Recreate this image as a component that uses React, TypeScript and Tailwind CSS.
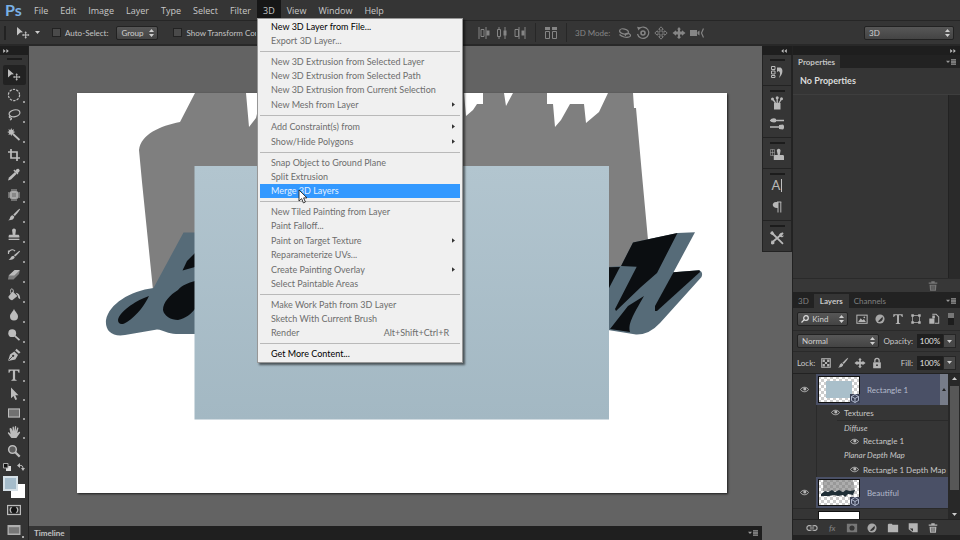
import type { ReactNode } from 'react';

type IconProps = { children: ReactNode; className?: string; size?: string };

// Drawn on a 14px grid, inherits the text colour
function Icon({ children, className = '', size = 'w-[14px] h-[14px]' }: IconProps) {
  return (
    <svg viewBox="0 0 14 14" fill="currentColor" className={`${size} shrink-0 ${className}`} aria-hidden="true">
      {children}
    </svg>
  );
}

const SMALL = 'w-[12px] h-[12px]';

const line = { fill: 'none', stroke: 'currentColor', strokeWidth: 1.2 };

const ICONS = {
  move: (
    <>
      <path d="M1 1l6 5.2-2.7.2L1 9.5z" />
      <path d="M9.7 5.2l1.3 1.6h-.8v1.7h1.7v-.8l1.6 1.3-1.6 1.3v-.8h-1.7v1.7h.8l-1.3 1.6-1.3-1.6h.8V9.5H7.500v.8L5.900 9l1.600-1.300v.8h1.700V6.800h-.8z" />
    </>
  ),
  marquee: <circle cx="7" cy="7" r="5.6" {...line} strokeDasharray="2.4 1.1" />,
  lasso: (
    <>
      <ellipse cx="7.5" cy="5.3" rx="5.500" ry="3.400" {...line} transform="rotate(-12 7.5 5.3)" />
      <path d="M3.500 7.500c-1.800.6-1.600 2.300 0 2.300s1.200 1.800-.6 2.200" {...line} />
    </>
  ),
  wand: (
    <>
      <path d="M4.300 0l.8 2 2-.8-.8 2 2 .9-2 .9.8 2-2-.8-.8 2-.9-2-2 .8.8-2-2-.9 2-.9-.8-2 2 .8z" />
      <path d="M6 6l6.500 6" stroke="currentColor" strokeWidth="1.800" />
    </>
  ),
  crop: <path d="M4 1v9h9M1 4h9v9" {...line} strokeWidth="1.700" />,
  eyedropper: (
    <>
      <path d="M8.300 2.800c1.200-2 2.400-2.500 3.700-1.600 1.300 1.200.8 2.500-1.200 3.700l.6.7-1 1-4-4 1-1z" />
      <path d="M8 4L9.500 6 4 11.500l-3 1 1-3z" />
    </>
  ),
  patch: (
    <>
      <rect x="2.500" y="3" width="9" height="8" rx="2.500" opacity=".85" />
      <path d="M5 1v2m2-2v2m2-2v2M5 11v2m2-2v2m2-2v2M1 5h1.500M1 7h1.500M1 9h1.500M11.500 5H13m-1.500 2H13m-1.500 2H13" stroke="currentColor" strokeWidth=".9" />
      <rect x="5" y="5" width="4" height="4" fill="#888" />
    </>
  ),
  brush: (
    <>
      <path d="M13 .8c.7.600-4 6.200-5.200 7.300L6.300 6.700C7.600 5.500 12.400.200 13 .8z" />
      <path d="M5.800 7.200l1.600 1.500c-.4 2.600-3 3.800-6.400 3.500 1.900-.7 1.600-1.700 2.200-3 .5-1.200 1.500-2 2.600-2z" />
    </>
  ),
  stamp: (
    <>
      <path d="M5.700 6.800L5.200 3a1.900 1.900 0 113.600 0l-.5 3.800H11c.8 0 1.400.7 1.400 1.500v1.200H1.600V8.300c0-.8.6-1.500 1.400-1.500z" />
      <path d="M1.600 10.700h10.800V12H1.600z" />
    </>
  ),
  history: (
    <>
      <path d="M13 2.800c.6.600-3.500 4.600-4.700 5.700L6.900 7.300C8.100 6.200 12.500 2.300 13 2.800zM6.400 7.700l1.400 1.300c-.4 2.200-2.800 3-6.300 2.900 2.300-1.200 2.300-4 4.900-4.200z" />
      <path d="M1.500 6V2.500M1.500 4.300C3.500 1.200 6.500 1 8 3.200" {...line} />
    </>
  ),
  eraser: (
    <>
      <path d="M7.600 2.500h5.200L12 6 6.500 11.500H1l.7-4z" opacity=".55" />
      <path d="M7.600 2h5.400L7.300 7.500H1.700z" />
    </>
  ),
  bucket: (
    <>
      <path d="M5.500 3.500l5 4.400-5.300 4.300C3.800 12.700 1 10 1.500 8.600z" />
      <path d="M4 5.500c-1-2.800-.4-4.700.8-4.700s1.600 1.700 1.800 3.700" {...line} strokeWidth=".9" />
      <path d="M8.600 4.700c2.600.200 4.600 2 4.600 6.300-1.200 0-2.200-.8-2.200-3z" />
    </>
  ),
  drop: <path d="M7 .8c.7 2.600 4 4.700 4 7.700a4 4 0 01-8 0c0-3 3.300-5.100 4-7.700z" />,
  dodge: (
    <>
      <circle cx="5.200" cy="5.200" r="3.900" />
      <path d="M7.800 7.800l4.700 4.400" stroke="currentColor" strokeWidth="1.700" />
    </>
  ),
  pen: (
    <>
      <path d="M1 13L3 6.500l4.300-3L11 7l-2.700 4.400z" />
      <path d="M8.200 2.500l1.300-1.800 4 3.600-1.600 1.500z" />
      <path d="M1.500 12.500l4.300-4.300" stroke="#333" strokeWidth=".8" />
      <circle cx="6.200" cy="7.800" r="1.100" fill="#333" />
    </>
  ),
  type: <path d="M1.500 1.500h11v3.300h-1C11.300 3.300 10.700 2.700 9.300 2.700H8.100v8c0 .9.400 1.100 1.500 1.200v.8H4.400v-.8c1.100-.1 1.500-.3 1.500-1.200v-8H4.700c-1.400 0-2 .6-2.200 2.100h-1z" />,
  pointer: <path d="M4 .5l7.500 7.700H8.300l1.800 4-1.800.8-1.800-4L4 11.300z" />,
  shape: (
    <>
      <rect x="1" y="2.500" width="12" height="9" opacity=".45" />
      <rect x="1.500" y="3" width="11" height="8" fill="none" stroke="currentColor" />
    </>
  ),
  hand: <path d="M3.300 3c.7-.3 1.200.2 1.500 1l.9 2.300-.2-4c0-1 1.300-1.100 1.400-.1L7.300 6l.6-4.500c.2-.9 1.400-.7 1.300.3l-.3 4.400 1.200-3.300c.4-.9 1.500-.4 1.300.4L10.300 8l1.500-1c.9-.5 1.700.3 1.100 1l-3.300 4.700c-.4.5-5 .6-5.400 0L1 8.500c-.5-1 .6-1.500 1.300-.8l1.300 1.200L2.600 4.300c-.2-.6.200-1.100.7-1.300z" />,
  zoom: (
    <>
      <circle cx="5.500" cy="5.500" r="3.800" {...line} strokeWidth="1.600" />
      <circle cx="5.500" cy="5.500" r="3" opacity=".3" />
      <path d="M8 8l4.700 4.600" stroke="currentColor" strokeWidth="2.200" />
    </>
  ),
  mask: (
    <>
      <rect x=".6" y="2.500" width="12.800" height="9" {...line} />
      <circle cx="7" cy="7" r="2.900" fill="#151515" />
      <path d="M4.500 4.200C3 5.800 3 8.200 4.500 9.800M9.500 4.200c1.500 1.600 1.500 4 0 5.600" {...line} />
    </>
  ),
  screen: (
    <>
      <rect x=".5" y="2" width="13" height="10" opacity=".9" />
      <rect x="1.800" y="4.200" width="10.400" height="6.300" fill="#777" />
    </>
  ),
  alignLeft: (
    <>
      <path d="M2 1v12M4 3.500h3v7H4zM9 1v12" {...line} strokeWidth="1" />
      <path d="M9.500 4.500h3v5h-3z" />
    </>
  ),
  alignCenter: (
    <>
      <path d="M4 1v2m0 8v2M2.500 3.500h3v7h-3zM10 1v12" {...line} strokeWidth="1" />
      <path d="M8.500 4.500h3v5h-3z" />
    </>
  ),
  alignRight: (
    <>
      <path d="M6 1v12M2 3.500h3.500v7H2zM12 1v12" {...line} strokeWidth="1" />
      <path d="M8.500 4.500h3v5h-3z" />
    </>
  ),
  distribute: (
    <>
      <path d="M1.500 5.500h4v7h-4zM8.500 5.500h4v7h-4z" {...line} strokeWidth="1" />
      <path d="M1 1h5v3H1zM8 1h5v3H8z" />
    </>
  ),
  orbit: (
    <>
      <ellipse cx="6" cy="5.500" rx="4.500" ry="2.500" {...line} transform="rotate(15 6 5.500)" />
      <path d="M1.500 8.500c2 2.300 7 3.500 10 2.300 2-1 .8-3.300-2-3.400-2.500 0-3 1.500-1.600 2.300" {...line} />
    </>
  ),
  roll: (
    <>
      <path d="M3 2.700A5.700 5.700 0 111.500 8" {...line} />
      <path d="M1 .8l3.800.6-2.300 3z" />
      <circle cx="7" cy="7" r="2" {...line} strokeWidth="1.600" />
    </>
  ),
  pan: <path d="M7 .8l2.300 2.500H8v2.700h2.700V4.700L13.200 7l-2.500 2.300V8H8v2.700h1.300L7 13.200l-2.300-2.500H6V8H3.300v1.300L.8 7l2.500-2.300V6H6V3.300H4.700z" fill="none" stroke="currentColor" strokeWidth=".9" />,
  slide: <path d="M7 1l2 2.500H8v2h2V4.300L13.500 7 10 9.700V8.500H8v2.200h1.300L7 13l-2.300-2.300H6V8.500H4v1.200L.5 7 4 4.300v1.200h2v-2H5z" />,
  camera: (
    <>
      <path d="M0 4h7v6H0zM7.500 6l2-1.500v5l-2-1.500z" />
      <path d="M13.500 2.500L11.500 7l2 4.500" {...line} />
    </>
  ),
  properties3d: (
    <>
      <path d="M1.500 1.500H5v3H1.500zM1.500 6H5v3H1.500zM1.500 10.500H5v2H1.500z" {...line} strokeWidth="1" />
      <path d="M7 2.500h3.500c3 1.500 2.500 7-1.500 10.500 1.700-4 1.200-6-.3-7L7 7z" />
    </>
  ),
  brushes: (
    <>
      <path d="M4 7h6.500v6.500H4z" />
      <path d="M5.500 7L3 3.500M7.200 7V2M9 7l2.500-4" stroke="currentColor" strokeWidth="1.300" />
      <circle cx="2.500" cy="3" r="1.500" />
      <circle cx="7.200" cy="1.700" r="1.500" />
      <circle cx="11.500" cy="2.700" r="1.500" />
    </>
  ),
  presets: (
    <>
      <path d="M0 3.500h14M0 10h9" stroke="currentColor" strokeWidth="1.400" />
      <path d="M1 2c2.500-1 4-.7 5 0v3c-1.500.7-3 .5-5-.3zM9 8l4-.5c1.500 1 1.500 4 0 5L9 12z" />
    </>
  ),
  cloneSource: (
    <>
      <path d="M.5 1.500h4v6h-4zM.5 4.500h4M2.500 1.500v6" fill="none" stroke="currentColor" strokeWidth=".8" opacity=".6" />
      <path d="M7.800 7L7 3.500a1.900 1.900 0 113.400 0L9.800 7h3c.7 0 1.200.6 1.200 1.300V12H3.800V8.300C3.800 7.600 4.300 7 5 7z" />
    </>
  ),
  tools: (
    <>
      <path d="M1.500 1.500l11 10.800M12.500 2.500L2 11.500" stroke="currentColor" strokeWidth="1.800" strokeLinecap="round" />
      <path d="M13.500 2l-2 1.500.5 1.300 1.800-.3c-.3 1.700-2.300 2.300-3.800 1.300L9 4.800C9 2.500 11 1 13.500 2zM0 2.500L2.500 0l1.700 2.500L2.500 4.300zM1.500 9.500c1.700 0 3 1.200 3 2.500s-2 2-3.500 1z" />
    </>
  ),
  image: (
    <>
      <rect x="1" y="2.500" width="12" height="9.500" {...line} />
      <path d="M2.500 10.500L5.500 6l2 2.500L9.300 7l2.200 3.500z" />
      <circle cx="9.700" cy="5" r="1" />
    </>
  ),
  adjust: (
    <>
      <circle cx="7" cy="7" r="5.300" opacity=".9" />
      <path d="M10 4.500A4.200 4.200 0 014.500 10z" fill="#333" />
    </>
  ),
  frame: (
    <>
      <rect x="3" y="3" width="8" height="8" {...line} strokeWidth=".9" />
      <path d="M1.500 1.500h3v3h-3zM9.500 1.500h3v3h-3zM1.500 9.500h3v3h-3zM9.500 9.500h3v3h-3z" />
    </>
  ),
  smart: (
    <>
      <path d="M5 1.500h4.500l3 3V12H8" {...line} />
      <path d="M1.500 6.500h6v6h-6zM5 3h3v3H5z" />
    </>
  ),
  checker: (
    <>
      <rect x="2" y="2" width="10" height="10" {...line} />
      <path d="M3 3h2.700v2.700H3zM8.300 3H11v2.700H8.300zM5.700 5.700h2.600v2.600H5.700zM3 8.300h2.700V11H3zM8.300 8.300H11V11H8.300z" />
    </>
  ),
  lock: (
    <>
      <rect x="2.500" y="6" width="9" height="7" rx=".6" />
      <path d="M4.500 6V4a2.500 2.500 0 015 0v2" {...line} strokeWidth="1.500" />
      <circle cx="7" cy="9.500" r="1.100" fill="#333" />
    </>
  ),
  link: (
    <path d="M6.500 5C5 3.800 1 3.700 1 7s4 3.200 5.500 2M7.500 5C9 3.800 13 3.700 13 7s-4 3.200-5.500 2M4.500 7h5" {...line} strokeWidth="1.400" />
  ),
  layerMask: <path d="M1 2h12v10H1zM7 4a3 3 0 100 6 3 3 0 000-6z" fillRule="evenodd" />,
  folder: <path d="M1 3l1-1h3.500l1 1.300H13V12H1z" />,
  newLayer: <path d="M2 1.500h10.500V12H6.500L2 8.500zM3.200 7.500H7V11z" fillRule="evenodd" />,
  trash: (
    <>
      <path d="M2 3h10v1.500H2zM5 1.500h4V3H5z" />
      <path d="M3 5.500h8l-.6 7H3.600z" />
      <path d="M5.500 6.500v5M7 6.500v5M8.500 6.500v5" stroke="#333" strokeWidth=".6" />
    </>
  ),
  paragraph: (
    <>
      <path d="M8 2v6H7C1.500 8 1.500 2 6 2z" />
      <path d="M8 2v10.500M10.800 2v10.500M7 2h4.300" {...line} strokeWidth="1" />
    </>
  ),
};

type IconName = keyof typeof ICONS;

const MENUS_BEFORE = ['File', 'Edit', 'Image', 'Layer', 'Type', 'Select', 'Filter'];
const MENUS_AFTER = ['View', 'Window', 'Help'];

type MenuEntry = { label: string; on?: boolean; sub?: boolean; active?: boolean; keys?: string };

const MENU_3D: MenuEntry[][] = [
  [{ label: 'New 3D Layer from File...', on: true }, { label: 'Export 3D Layer...' }],
  [
    { label: 'New 3D Extrusion from Selected Layer' },
    { label: 'New 3D Extrusion from Selected Path' },
    { label: 'New 3D Extrusion from Current Selection' },
    { label: 'New Mesh from Layer', sub: true },
  ],
  [
    { label: 'Add Constraint(s) from', sub: true },
    { label: 'Show/Hide Polygons', sub: true },
  ],
  [{ label: 'Snap Object to Ground Plane' }, { label: 'Split Extrusion' }, { label: 'Merge 3D Layers', active: true }],
  [
    { label: 'New Tiled Painting from Layer' },
    { label: 'Paint Falloff...' },
    { label: 'Paint on Target Texture', sub: true },
    { label: 'Reparameterize UVs...' },
    { label: 'Create Painting Overlay', sub: true },
    { label: 'Select Paintable Areas' },
  ],
  [
    { label: 'Make Work Path from 3D Layer' },
    { label: 'Sketch With Current Brush' },
    { label: 'Render', keys: 'Alt+Shift+Ctrl+R' },
  ],
  [{ label: 'Get More Content...', on: true }],
];

function DropMenu() {
  return (
    <div className="absolute left-0 top-[18px] z-20 w-[206px] bg-[#f0f0f0] border border-[#979797] shadow-[2px_2px_2px_rgba(0,0,0,0.55)] font-['Lato',sans-serif] text-[9px] py-px">
      {MENU_3D.map((group, i) => (
        <ul key={i} className={i > 0 ? 'border-t border-[#b9b9b9] mt-[3px] pt-[3px] mx-[2px]' : 'mx-[2px]'}>
          {group.map((item) => (
            <li key={item.label}>
              <button
                className={`w-full flex items-center justify-between px-[11px] text-left ${item.sub ? 'h-[15px]' : 'h-[14px]'} ${
                  item.active ? 'bg-[#3399ff] text-[#e4f1ff]' : item.on ? 'text-black' : 'text-[#6d6d6d]'
                }`}
              >
                <span className="whitespace-nowrap">{item.label}</span>
                {item.keys && <span>{item.keys}</span>}
                {item.sub && (
                  <svg viewBox="0 0 4 6" className="w-[3px] h-[5px] -mr-[6px]" fill="#333">
                    <path d="M0 0l4 3-4 3z" />
                  </svg>
                )}
              </button>
            </li>
          ))}
        </ul>
      ))}
      {/* Mouse pointer over the highlighted entry */}
      <svg viewBox="0 0 10 15" className="absolute left-[40px] top-[170px] w-[10px] h-[15px]" fill="#fff" stroke="#222" strokeWidth=".9">
        <path d="M1 1v11l2.600-2.400 1.800 4.300 2-.9-1.800-4.100h3.400z" />
      </svg>
    </div>
  );
}

function MenuBar() {
  return (
    <nav className="h-5 flex items-stretch bg-[#353535] text-[#c8c8c8] font-['Open_Sans',sans-serif] text-[9px]">
      <span className="w-[28px] pl-[5px] flex items-center text-[16px] font-bold text-[#79b0e6] font-['Lato',sans-serif]">Ps</span>
      {MENUS_BEFORE.map((m) => (
        <button key={m} className="px-[6px] pt-px">{m}</button>
      ))}
      <div className="relative">
        <button className="px-[6px] h-[18px] pt-[3px] leading-[15px] block bg-[#161616]">3D</button>
        <DropMenu />
      </div>
      {MENUS_AFTER.map((m) => (
        <button key={m} className="px-[6px] pt-px">{m}</button>
      ))}
    </nav>
  );
}

function UpDown() {
  return (
    <svg viewBox="0 0 5 8" className="w-[5px] h-[8px] absolute right-[4px] top-1/2 -translate-y-1/2 pointer-events-none" fill="#cfcfcf">
      <path d="M0 3l2.500-3L5 3zM0 5h5L2.500 8z" />
    </svg>
  );
}

function Dropdown({ label, value, className }: { label: string; value: string; className: string }) {
  return (
    <span className={`relative block shrink-0 ${className}`}>
      <select
        aria-label={label}
        className="appearance-none w-full h-[14px] block px-[4px] rounded-[2px] border border-[#222] bg-linear-to-b from-[#575757] to-[#444] text-[#d0d0d0] text-[8px] leading-[12px]"
      >
        <option>{value}</option>
      </select>
      <UpDown />
    </span>
  );
}

function Check({ children }: { children: ReactNode }) {
  return (
    <label className="flex items-center gap-[4px] whitespace-nowrap">
      <input type="checkbox" className="appearance-none shrink-0 w-[9px] h-[9px] bg-[#4a4a4a] border border-[#222]" />
      {children}
    </label>
  );
}

function Divider() {
  return <span className="w-px h-[19px] bg-[#272727] shrink-0" />;
}

function OptionsBar() {
  return (
    <div className="h-[26px] flex items-center bg-[#353535] border-t border-t-[#262626] border-b-2 border-b-[#282828] text-[#c4c4c4] text-[8px]">
      <div className="w-[477px] shrink-0 flex items-center pl-[4px]">
        <div className="w-[252px] flex items-center overflow-hidden">
          <span className="w-[2px] h-[14px] border-x border-[#222] shrink-0" />
          <Icon className="ml-[10px]">{ICONS.move}</Icon>
          <svg viewBox="0 0 5 3" className="w-[5px] h-[3px] ml-[5px] mr-[12px] shrink-0" fill="#ccc"><path d="M0 0h5L2.500 3z" /></svg>
          <Check>Auto-Select:</Check>
          <Dropdown label="Auto-select target" value="Group" className="w-[42px] ml-[8px] mr-[15px]" />
          <Check>Show Transform Controls</Check>
        </div>
      </div>
      <div className="flex items-center gap-[4px] text-[#858585]">
        {(['alignLeft', 'alignCenter', 'alignRight'] as IconName[]).map((n) => (
          <button key={n} aria-label={n}><Icon>{ICONS[n]}</Icon></button>
        ))}
      </div>
      <div className="flex items-center gap-[8px] ml-[8px] text-[#858585]">
        <Divider />
        <button aria-label="Distribute"><Icon>{ICONS.distribute}</Icon></button>
        <Divider />
        <span className="whitespace-nowrap">3D Mode:</span>
      </div>
      <div className="flex items-center gap-[4px] ml-[8px] text-[#858585]">
        {(['orbit', 'roll', 'pan', 'slide', 'camera'] as IconName[]).map((n) => (
          <button key={n} aria-label={n}><Icon>{ICONS[n]}</Icon></button>
        ))}
      </div>
      <Dropdown label="Workspace" value="3D" className="w-[90px] ml-auto mr-[6px]" />
    </div>
  );
}

function Arrows({ back = false }: { back?: boolean }) {
  return (
    <svg viewBox="0 0 7 5" className="w-[6px] h-[4px]" fill="#bbb">
      <path d={back ? 'M3 0v5L0 2.500zM7 0v5L4 2.500z' : 'M0 0l3 2.500L0 5zM4 0l3 2.500L4 5z'} />
    </svg>
  );
}

function Grip() {
  return <span className="block w-[15px] h-[2px] mx-auto bg-[#1c1c1c]" />;
}

const TOOLS: { name: IconName; tall: boolean }[] = [
  ...(
    ['move', 'marquee', 'lasso', 'wand', 'crop', 'eyedropper', 'patch', 'brush', 'stamp', 'history', 'eraser', 'bucket', 'drop', 'dodge', 'pen'] as IconName[]
  ).map((name) => ({ name, tall: true })),
  ...(['type', 'pointer', 'shape', 'hand', 'zoom'] as IconName[]).map((name) => ({ name, tall: false })),
];

function Toolbar() {
  return (
    <aside className="w-[29px] shrink-0 bg-[#343434] border-r border-[#222] text-[#bcbcbc] overflow-hidden">
      <div className="h-[9px] bg-[#1e1e1e] flex items-center pl-[3px]"><Arrows /></div>
      <div className="pt-[3px] pb-[5px]"><Grip /></div>
      {TOOLS.map(({ name, tall }, i) => (
        <button
          key={name}
          aria-label={name}
          className={`relative flex items-center justify-center w-[23px] mx-auto ${tall ? 'h-5' : 'h-[19px]'} ${
            i === 0 ? 'bg-[#222] rounded-[2px]' : ''
          }`}
        >
          <Icon>{ICONS[name]}</Icon>
          {i > 0 && name !== 'zoom' && <i className="absolute right-[1px] bottom-[2px] w-[2px] h-[2px] bg-[#999]" />}
        </button>
      ))}
      <div className="flex items-center justify-between px-[3px] pt-px h-[13px]">
        <svg viewBox="0 0 8 8" className="w-[8px] h-[8px]"><path d="M3 3h5v5H3z" fill="#ddd" /><path d="M.5.500h4.500v4.500H.5z" fill="#111" stroke="#aaa" /></svg>
        <svg viewBox="0 0 8 8" className="w-[8px] h-[8px]" fill="#bbb"><path d="M0 2.500L3 0v5zM4 5h4L6 8z" /><path d="M2 2.500c3-.5 4 .5 4 3" fill="none" stroke="#bbb" /></svg>
      </div>
      <div className="relative h-[23px] mt-[3px] mx-[3px]">
        <button aria-label="Background colour" className="absolute left-[8px] top-[8px] w-[14px] h-[14px] bg-white" />
        <button aria-label="Foreground colour" className="absolute left-0 top-0 w-[15px] h-[15px] bg-[#a5bccb] border-2 border-[#d5e0e7]" />
      </div>
      <button aria-label="Quick mask" className="flex items-center justify-center w-full h-[21px] pt-px"><Icon>{ICONS.mask}</Icon></button>
      <button aria-label="Screen mode" className="relative flex items-center justify-center w-full h-5">
        <Icon>{ICONS.screen}</Icon>
        <i className="absolute right-[4px] bottom-[2px] w-[2px] h-[2px] bg-[#aaa]" />
      </button>
    </aside>
  );
}

function Artwork() {
  return (
    <svg viewBox="77 93 650 400" className="w-full block bg-white shadow-[1px_1px_2px_rgba(0,0,0,0.7)]" role="img" aria-label="Document">
      <defs>
        <linearGradient id="plate" x1="0" y1="0" x2="0" y2="1">
          <stop offset="0" stopColor="#b2c5cf" />
          <stop offset="1" stopColor="#a3b8c3" />
        </linearGradient>
      </defs>
      {/* Shadow cast by the extrusion */}
      <path
        fill="#7f7f7f"
        d="M195 93L180 122C160 126 141 134 139 150L142 182L153 290H195V267H622L648 240L642 175L636 108H634L633 93H608L599 112L586 123L584 104H570L561 120L555 127L553 104H547V93H513L506 106L504 93H483V104H477L473 110L466 116L464 93H262L256 118L249 127L246 93Z"
      />
      {/* Left extrusion */}
      <path
        fill="#566b78"
        d="M183.500 232.500H196V334H176C168 334 164 330 157 329.500L125 335C112 337 105 331 106 320C109 304 130 291 153.500 288Z"
      />
      <path fill="#0b0e11" d="M149 296L144 298C132 303 119 313 118 320C118 325 123 325 127 322C138 315 145 304 149 296Z" />
      <path fill="#0b0e11" d="M195 281C188 283 182 285 178 290C170 295 163 302 163 310C164 316 171 320 178 320C186 318 191 314 195 309Z" />
      <path fill="#0b0e11" d="M195 253L187 261L182.500 270.500L195 267Z" />
      {/* Right extrusion */}
      <path
        fill="#566b78"
        d="M608 267L621 266L633 242.500L677.500 233L695 232.300L673.500 272.300L699 270.300Q703.500 272 701.500 277L660 323Q649 335 636 334.500L608 330Z"
      />
      <g fill="#0b0e11">
        <path d="M621 266L633 242.500L677.500 233L657 273L641 287L616 311L615 309L636.700 266.700Z" />
        <path d="M608 267.300L620 267L608 290Z" />
        <path d="M644 296L628 306L610 329L630 332C628 324 632 317 644 296Z" />
        <path d="M673.500 272.300L699.500 270.300L700 272L657 311H655V306Z" />
      </g>
      <rect x="194.500" y="166" width="414.500" height="253.500" fill="url(#plate)" />
    </svg>
  );
}

function PanelMenu() {
  return (
    <button aria-label="Panel menu" className="ml-auto mr-[4px] self-center">
      <svg viewBox="0 0 11 6" className="w-[10px] h-[6px]" fill="#999">
        <path d="M0 1.500h4.500L2.200 4zM5.500 0H11v1H5.500zM5.500 1.700H11v1H5.500zM5.500 3.400H11v1H5.500zM5.500 5H11v1H5.500z" />
      </svg>
    </button>
  );
}

const DOCK: (IconName | 'character')[][] = [['properties3d'], ['brushes', 'presets'], ['cloneSource'], ['character', 'paragraph'], ['tools']];

function IconDock() {
  return (
    <aside className="w-[30px] shrink-0 bg-[#636363]">
      <div className="h-[9px] bg-[#1e1e1e] flex items-center justify-end pr-[5px]"><Arrows back /></div>
      {DOCK.map((group) => (
        <div key={group[0]} className="bg-[#353535] border border-t-0 border-[#232323] pt-[4px] pb-[3px] text-[#b8b8b8]">
          <Grip />
          {group.map((n) => (
            <button key={n} aria-label={n} className="w-full h-[21px] flex items-center justify-center">
              {n === 'character' ? (
                <span className="text-[13px] leading-none border-r border-[#c0c0c0] pr-px">A</span>
              ) : (
                <Icon>{ICONS[n]}</Icon>
              )}
            </button>
          ))}
        </div>
      ))}
    </aside>
  );
}

function Eye() {
  return (
    <svg viewBox="0 0 10 7" className="w-[9px] h-[7px] shrink-0" role="img" aria-label="Visible">
      <path d="M.5 3.500C2.500.2 7.500.2 9.500 3.500 7.500 6.800 2.500 6.800.5 3.500z" fill="none" stroke="#b8b8b8" strokeWidth="1.100" />
      <circle cx="5.300" cy="3" r="1.700" fill="#b8b8b8" />
    </svg>
  );
}

function Thumb({ kind }: { kind: 'plate' | 'word' }) {
  return (
    <svg viewBox="0 0 42 27" className="w-[42px] h-[27px] shrink-0">
      <defs>
        <pattern id={`chk-${kind}`} width="6" height="6" patternUnits="userSpaceOnUse">
          <rect width="6" height="6" fill="#fff" />
          <path d="M0 0h3v3H0zM3 3h3v3H3z" fill="#cdcdcd" />
        </pattern>
      </defs>
      <rect x=".5" y=".5" width="41" height="26" fill={`url(#chk-${kind})`} stroke="#111" />
      {kind === 'plate' ? (
        <rect x="8" y="5" width="26" height="17" fill="#a9bfca" />
      ) : (
        <>
          <path d="M5 1h30l2 11H5z" fill="#777" opacity=".6" />
          <path d="M3 15l4-3 3 1 4-2 3 2 4-2 4 2 3-2 4 1 5-1-2 5-5-1-3 3-2-2-5 1-4-1-5 1-8 0z" fill="#1f2e36" />
        </>
      )}
      <path d="M32 18h10v9H32z" fill="#3c4256" />
      <path d="M37 18.500l3.500 2v4L37 26.500l-3.500-2v-4zM33.500 20.500l3.500 2 3.500-2M37 22.500v4" fill="none" stroke="#b9c2d6" strokeWidth=".9" />
    </svg>
  );
}

function PropertiesPanel() {
  return (
    <section className="flex flex-col h-[248px] border-b-2 border-[#222]">
      <div className="h-[9px] bg-[#1e1e1e] flex items-center justify-end pr-[4px]"><Arrows /></div>
      <div className="h-[13px] bg-[#222] flex text-[8px]">
        <button className="bg-[#353535] px-[5px] font-bold text-[#c4c4c4]">Properties</button>
        <PanelMenu />
      </div>
      <h2 className="h-[27px] pl-[7px] flex items-center text-[9px] font-bold text-[#dcdcdc] border-b border-[#3e3e3e]">No Properties</h2>
      <div className="flex-1 flex">
        <div className="flex-1" />
        <div className="w-[12px] bg-[#2a2a2a] border-l border-[#222]" />
      </div>
      <div className="h-[14px] border-t border-[#2a2a2a] bg-[#373737] flex items-center justify-end pr-[21px] text-[#777]">
        <button aria-label="Delete"><Icon size={SMALL}>{ICONS.trash}</Icon></button>
      </div>
    </section>
  );
}

function Percent({ id, label }: { id: string; label: string }) {
  return (
    <div className="flex items-center ml-auto">
      <label htmlFor={id} className="pr-[4px]">{label}</label>
      <input id={id} defaultValue="100%" className="w-[26px] h-[14px] bg-[#1f1f1f] text-[#e4e4e4] text-center" />
      <button aria-label={`${label} slider`} className="w-[13px] h-[14px] bg-[#484848] border border-[#262626] flex items-center justify-center">
        <svg viewBox="0 0 5 3" className="w-[5px] h-[3px]" fill="#ccc"><path d="M0 0h5L2.500 3z" /></svg>
      </button>
    </div>
  );
}

function LayerRow({ name, kind }: { name: string; kind: 'plate' | 'word' }) {
  return (
    <div className="flex h-[31px]">
      <div className="w-[23px] flex items-center justify-center"><Eye /></div>
      <div className="flex-1 flex items-center bg-[#4a5066] pl-[2px] text-[#b4bacb]">
        <Thumb kind={kind} />
        <span className="pl-[7px]">{name}</span>
        {kind === 'plate' && (
          <button aria-label="Collapse" className="ml-auto self-stretch w-[8px] bg-[#777c89] flex items-center justify-center">
            <svg viewBox="0 0 4 3" className="w-[4px] h-[3px]" fill="#222"><path d="M0 3h4L2 0z" /></svg>
          </button>
        )}
      </div>
    </div>
  );
}

function LayersPanel() {
  return (
    <section className="flex-1 flex flex-col min-h-0 text-[8px] text-[#c8c8c8]">
      <div className="h-[14px] bg-[#222] flex shrink-0">
        <button className="px-[5px] text-[#808080]">3D</button>
        <button className="px-[6px] bg-[#353535] font-bold">Layers</button>
        <button className="px-[5px] text-[#808080]">Channels</button>
        <PanelMenu />
      </div>
      <div className="h-[22px] flex items-center pl-[4px] pr-[4px] shrink-0">
        <span className="relative">
          <Dropdown label="Filter kind" value="&nbsp;&nbsp;&nbsp;&nbsp;&nbsp;Kind" className="w-[51px]" />
          <svg viewBox="0 0 8 8" className="absolute left-[4px] top-[3px] w-[8px] h-[8px]" fill="none" stroke="#ddd" strokeWidth="1.200">
            <circle cx="5" cy="3" r="2.300" /><path d="M3.300 4.700L.5 7.500" />
          </svg>
        </span>
        <div className="flex flex-1 justify-between pl-[8px] pr-[8px] text-[#b4b4b4]">
          {(['image', 'adjust', 'type', 'frame', 'smart'] as IconName[]).map((n) => (
            <button key={n} aria-label={`Filter ${n}`}><Icon size={SMALL}>{ICONS[n]}</Icon></button>
          ))}
        </div>
        <button aria-label="Toggle filter" className="w-[6px] h-[12px] bg-[#1d1d1d] mr-[2px] flex items-start"><span className="block w-full h-[5px] bg-[#777]" /></button>
      </div>
      <div className="h-[21px] flex items-center pl-[4px] pr-[4px] border-t border-[#2a2a2a] shrink-0">
        <Dropdown label="Blend mode" value="Normal" className="w-[82px]" />
        <Percent id="opacity" label="Opacity:" />
      </div>
      <div className="h-[22px] flex items-center pl-[4px] pr-[4px] border-t border-[#2a2a2a] shrink-0">
        <span>Lock:</span>
        <div className="flex gap-[5px] pl-[5px] text-[#b4b4b4]">
          {(['checker', 'brush', 'slide', 'lock'] as IconName[]).map((n) => (
            <button key={n} aria-label={`Lock ${n}`}><Icon size={SMALL}>{ICONS[n]}</Icon></button>
          ))}
        </div>
        <Percent id="fill" label="Fill:" />
      </div>
      <div className="flex-1 min-h-0 flex border-t border-[#222]">
        <div className="flex-1 min-w-0 overflow-hidden">
          <LayerRow name="Rectangle 1" kind="plate" />
          <ul className="ml-[23px] border-l border-[#2a2a2a] whitespace-nowrap">
            <li className="h-[15px] flex items-center gap-[4px] pl-[14px]"><Eye />Textures</li>
            <li className="h-[14px] flex items-center ml-[20px] pl-[7px] border-t border-[#2a2a2a] italic">Diffuse</li>
            <li className="h-[14px] flex items-center gap-[4px] pl-[33px]"><Eye />Rectangle 1</li>
            <li className="h-[14px] flex items-center pl-[27px] italic">Planar Depth Map</li>
            <li className="h-[15px] flex items-center gap-[4px] pl-[33px]"><Eye />Rectangle 1 Depth Map</li>
          </ul>
          <LayerRow name="Beautiful" kind="word" />
          <div className="flex border-t border-[#2a2a2a] pt-[2px]">
            <div className="ml-[25px] w-[42px] h-[20px] bg-white border border-[#111]" />
          </div>
        </div>
        <div className="w-[12px] bg-[#282828] flex flex-col items-center pt-[3px] pb-[3px]">
          <svg viewBox="0 0 5 3" className="w-[5px] h-[3px]" fill="#ccc"><path d="M0 3h5L2.500 0z" /></svg>
          <div className="w-[9px] mt-[6px] h-[104px] bg-[#575757]" />
          <svg viewBox="0 0 5 3" className="w-[5px] h-[3px] mt-auto" fill="#ccc"><path d="M0 0h5L2.500 3z" /></svg>
        </div>
      </div>
      <div className="h-[16px] shrink-0 flex items-center justify-between pl-[13px] pr-[21px] border-t border-[#222] text-[#b4b4b4]">
        <button aria-label="Link layers"><Icon size={SMALL}>{ICONS.link}</Icon></button>
        <button className="w-[12px] italic font-bold text-[#777]">fx</button>
        <button aria-label="Add mask" className="text-[#777]"><Icon size={SMALL}>{ICONS.layerMask}</Icon></button>
        {(['adjust', 'folder', 'newLayer', 'trash'] as IconName[]).map((n) => (
          <button key={n} aria-label={n}><Icon size={SMALL}>{ICONS[n]}</Icon></button>
        ))}
      </div>
      <div className="h-[5px] shrink-0 bg-[#222]" />
    </section>
  );
}

export default function App() {
  return (
    <div className="h-screen flex flex-col overflow-hidden bg-[#636363] font-['Lato','Open_Sans',sans-serif]">
      <MenuBar />
      <OptionsBar />
      <div className="flex-1 min-h-0 flex">
        <Toolbar />
        <div className="flex-1 min-w-0 flex flex-col">
          <main className="flex-1 min-h-0 pl-12 pr-[35px] pt-[47px]">
            <Artwork />
          </main>
          <footer className="h-[14px] bg-[#1f1f1f] flex text-[8px]">
            <button className="px-[5px] bg-[#353535] font-bold text-[#c4c4c4]">Timeline</button>
            <PanelMenu />
          </footer>
        </div>
        <IconDock />
        <aside className="w-[168px] shrink-0 flex flex-col bg-[#353535] border-l border-[#222]">
          <PropertiesPanel />
          <LayersPanel />
        </aside>
      </div>
    </div>
  );
}
